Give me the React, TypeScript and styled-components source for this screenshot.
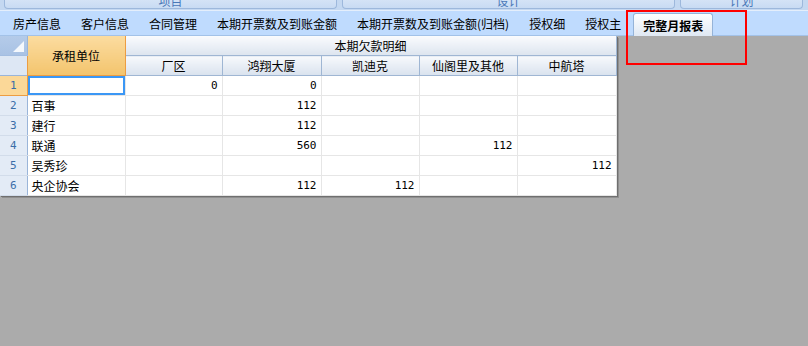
import * as React from 'react';
import styled, { createGlobalStyle } from 'styled-components';

const GlobalStyle = createGlobalStyle`
  html, body {
    margin: 0;
    padding: 0;
    background: #ababab;
  }
  body {
    font-family: "Noto Sans CJK SC", "DejaVu Sans", sans-serif;
    font-size: 12px;
    color: #000;
  }
`;

const Page = styled.div`
  position: relative;
  width: 808px;
  height: 346px;
  overflow: hidden;
  background: #ababab;
`;

const Ribbon = styled.div`
  display: flex;
  gap: 5px;
  height: 10px;
  padding: 0 0 0 4px;
  background: #c4d8f1;
  border-bottom: 1px solid #e4eefb;
`;

const RibbonButton = styled.div<{ $w: number }>`
  width: ${(p) => p.$w}px;
  flex-shrink: 0;
  height: 8px;
  display: flex;
  align-items: flex-end;
  justify-content: center;
  overflow: hidden;
  background: linear-gradient(#d4e3f6, #c8dbf3);
  border: 1px solid #9db8dc;
  border-top: none;
  border-radius: 0 0 4px 4px;
  color: #4a78b8;
`;

const RibbonLabel = styled.span`
  line-height: 12px;
  margin-bottom: 1px;
  font-size: 12px;
`;

const TabBar = styled.div`
  display: flex;
  align-items: flex-end;
  height: 24px;
  padding-left: 3px;
  background: #bfdbfe;
  border-bottom: 1px solid #a3c2e8;
`;

const Tab = styled.div<{ $active?: boolean }>`
  height: ${(p) => (p.$active ? '22px' : '24px')};
  display: flex;
  align-items: center;
  padding: 0 ${(p) => (p.$active ? '9px' : '10px')};
  margin-left: ${(p) => (p.$active ? '2px' : '0')};
  font-size: 12px;
  font-weight: ${(p) => (p.$active ? 'bold' : 'normal')};
  white-space: pre;
  color: #000;
  background: ${(p) => (p.$active ? 'linear-gradient(#fdfeff, #dfe8f3)' : 'transparent')};
  border: ${(p) => (p.$active ? '1px solid #95b3d8' : 'none')};
  border-bottom: none;
  border-radius: ${(p) => (p.$active ? '3px 3px 0 0' : '0')};
  margin-bottom: ${(p) => (p.$active ? '-1px' : '0')};
`;

const Content = styled.div`
  display: flex;
  align-items: flex-start;
`;

const GridFrame = styled.div`
  background: #fff;
  box-shadow: 1px 1px 0 #6f6f6f, 2px 2px 0 #8f8f8f;
`;

const Table = styled.table`
  border-collapse: collapse;
  table-layout: fixed;
  width: 616px;
  font-size: 12px;
`;

const Col = styled.col<{ $w: number }>`
  width: ${(p) => p.$w}px;
`;

const Corner = styled.th<{ $top?: boolean }>`
  height: 19px;
  padding: 0;
  position: relative;
  background: ${(p) => (p.$top ? 'linear-gradient(#b4cbe9, #a9c2e4)' : '#dde7f4')};
  border-right: 1px solid #9ab5d9;
  border-bottom: 1px solid ${(p) => (p.$top ? '#a3bde0' : '#9ab5d9')};
`;

const CornerMark = styled.span`
  position: absolute;
  right: 3px;
  bottom: 3px;
  width: 0;
  height: 0;
  border-left: 11px solid transparent;
  border-bottom: 11px solid #f4f8fd;
`;

const KeyHead = styled.th`
  padding: 0;
  font-weight: normal;
  background: linear-gradient(#fbdca0, #f3c46d);
  border: 1px solid #ec9d42;
  border-top: none;
`;

const GroupHead = styled.th`
  height: 19px;
  padding: 0;
  font-weight: normal;
  text-align: center;
  background: linear-gradient(#fafbfd, #dde5ef);
  border-bottom: 1px solid #9fb6d3;
  border-right: 1px solid #9fb6d3;
`;

const ColHead = styled.th`
  height: 19px;
  padding: 0;
  font-weight: normal;
  text-align: center;
  background: linear-gradient(#f7f9fc, #d9e2ee);
  border-right: 1px solid #9fb6d3;
  border-bottom: 1px solid #9fb6d3;
`;

const RowHead = styled.td<{ $selected?: boolean }>`
  height: 19px;
  padding: 0;
  text-align: center;
  font-family: "DejaVu Sans Mono", monospace;
  font-size: 11px;
  color: #3a6ea8;
  background: ${(p) => (p.$selected ? '#fbd898' : '#e3ebf6')};
  border-right: 1px solid ${(p) => (p.$selected ? '#ec9d42' : '#9ab5d9')};
  border-bottom: 1px solid ${(p) => (p.$selected ? '#ec9d42' : '#d2dcea')};
`;

const Cell = styled.td<{ $num?: boolean; $focus?: boolean }>`
  height: 19px;
  padding: 0 4px;
  white-space: nowrap;
  overflow: hidden;
  text-align: ${(p) => (p.$num ? 'right' : 'left')};
  font-family: ${(p) => (p.$num ? '"DejaVu Sans Mono", monospace' : 'inherit')};
  font-size: ${(p) => (p.$num ? '11px' : '12px')};
  border-right: 1px solid #e6e6e6;
  border-bottom: 1px solid #e6e6e6;
  box-shadow: ${(p) => (p.$focus ? 'inset 0 0 0 2px #3b97f5' : 'none')};
`;

const Highlight = styled.div`
  position: absolute;
  left: 626px;
  top: 10px;
  width: 117px;
  height: 51px;
  border: 2px solid #ff0000;
  pointer-events: none;
`;

const tabs = ['房产信息', '客户信息', '合同管理', '本期开票数及到账金额', '本期开票数及到账金额(归档)', '授权细', '授权主'];
const columns = ['厂区', '鸿翔大厦', '凯迪克', '仙阁里及其他', '中航塔'];
const colWidths = [27, 98, 97, 99, 98, 98, 99];

const rows: { name: string; values: (number | null)[] }[] = [
  { name: '', values: [0, 0, null, null, null] },
  { name: '百事', values: [null, 112, null, null, null] },
  { name: '建行', values: [null, 112, null, null, null] },
  { name: '联通', values: [null, 560, null, 112, null] },
  { name: '吴秀珍', values: [null, null, null, null, 112] },
  { name: '央企协会', values: [null, 112, 112, null, null] },
];

export default function App(): JSX.Element {
  return (
    <Page>
      <GlobalStyle />
      <Ribbon>
        <RibbonButton $w={331}><RibbonLabel>项目</RibbonLabel></RibbonButton>
        <RibbonButton $w={331}><RibbonLabel>设计</RibbonLabel></RibbonButton>
        <RibbonButton $w={121}><RibbonLabel>计划</RibbonLabel></RibbonButton>
        <RibbonButton $w={40} />
      </Ribbon>
      <TabBar>
        {tabs.map((t) => (
          <Tab key={t}>{t}</Tab>
        ))}
        <Tab $active>完整月报表</Tab>
      </TabBar>
      <Content>
        <GridFrame>
          <Table>
            <colgroup>
              {colWidths.map((w, i) => (
                <Col key={i} $w={w} />
              ))}
            </colgroup>
            <thead>
              <tr>
                <Corner $top>
                  <CornerMark />
                </Corner>
                <KeyHead rowSpan={2}>承租单位</KeyHead>
                <GroupHead colSpan={5}>本期欠款明细</GroupHead>
              </tr>
              <tr>
                <Corner />
                {columns.map((c) => (
                  <ColHead key={c}>{c}</ColHead>
                ))}
              </tr>
            </thead>
            <tbody>
              {rows.map((r, i) => (
                <tr key={i}>
                  <RowHead $selected={i === 0}>{i + 1}</RowHead>
                  <Cell $focus={i === 0}>{r.name}</Cell>
                  {r.values.map((v, j) => (
                    <Cell key={j} $num>
                      {v === null ? '' : v}
                    </Cell>
                  ))}
                </tr>
              ))}
            </tbody>
          </Table>
        </GridFrame>
      </Content>
      <Highlight />
    </Page>
  );
}
